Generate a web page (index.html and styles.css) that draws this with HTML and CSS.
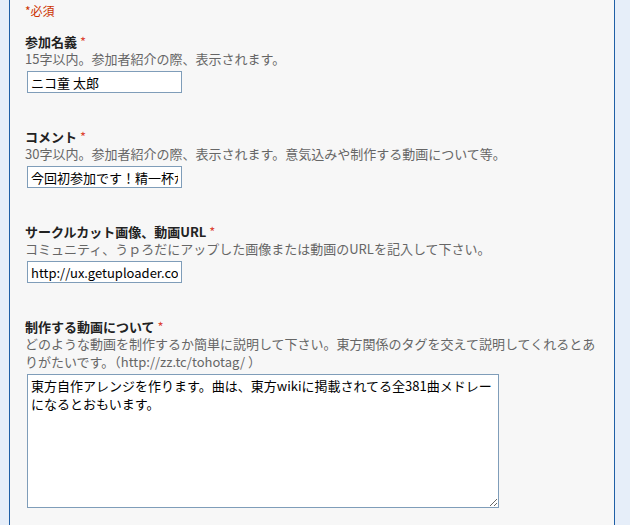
FILE: index.html
```html
<!DOCTYPE html>
<html lang="ja">
<head>
<meta charset="utf-8">
<link rel="stylesheet" href="styles.css">
</head>
<body>
<div class="panel">
  <p class="required-note">*必須</p>

  <div class="field">
    <div class="label">参加名義 <span class="star">*</span></div>
    <div class="desc">15字以内。参加者紹介の際、表示されます。</div>
    <input class="text" type="text" value="ニコ童 太郎">
  </div>

  <div class="field">
    <div class="label">コメント <span class="star">*</span></div>
    <div class="desc">30字以内。参加者紹介の際、表示されます。意気込みや制作する動画について等。</div>
    <input class="text" type="text" value="今回初参加です！精一杯がんばります！">
  </div>

  <div class="field">
    <div class="label">サークルカット画像、動画URL <span class="star">*</span></div>
    <div class="desc">コミュニティ、うｐろだにアップした画像または動画のURLを記入して下さい。</div>
    <input class="text" type="text" value="http://ux.getuploader.com/nicodou/">
  </div>

  <div class="field">
    <div class="label">制作する動画について <span class="star">*</span></div>
    <div class="desc">どのような動画を制作するか簡単に説明して下さい。東方関係のタグを交えて説明してくれるとありがたいです。（http://zz.tc/tohotag/ ）</div>
    <textarea class="area">東方自作アレンジを作ります。曲は、東方wikiに掲載されてる全381曲メドレーになるとおもいます。</textarea>
  </div>
</div>
</body>
</html>
```

FILE: styles.css
```css
html, body {
  margin: 0;
  padding: 0;
  background: #e6eef9;
  height: 100%;
  overflow: hidden;
}

body {
  font-family: "Noto Sans CJK JP", "Liberation Sans", sans-serif;
  font-size: 13px;
  color: #333;
}

.panel {
  margin-left: 9px;
  width: 606px;
  min-height: 100%;
  box-sizing: border-box;
  background: #f7f7f7;
  border-left: 1px solid #1f5fa6;
  border-right: 1px solid #1f5fa6;
  padding: 2px 0 0 15px;
}

.required-note {
  margin: 0;
  font-size: 12px;
  line-height: 17px;
  color: #cc3300;
}

.field {
  display: flex;
  flex-direction: column;
  align-items: flex-start;
  margin-top: 14px;
  margin-bottom: 35px;
}

.label {
  font-weight: bold;
  font-size: 13px;
  line-height: 17px;
  color: #222;
}

.star {
  color: #dd4433;
  font-weight: normal;
}

.desc {
  color: #666;
  line-height: 18px;
  width: 580px;
}

.text {
  margin: 3px 0 0 2px;
  width: 155px;
  height: 22px;
  box-sizing: border-box;
  border: 1px solid #7f9db9;
  background: #fff;
  padding: 1px 3px;
  font-family: "Noto Sans CJK JP", "Liberation Sans", sans-serif;
  font-size: 13px;
  color: #000;
  outline: none;
}

.area {
  margin: 3px 0 0 2px;
  width: 472px;
  height: 134px;
  box-sizing: border-box;
  border: 1px solid #7f9db9;
  background: #fff;
  padding: 2px 3px;
  font-family: "Noto Sans CJK JP", "Liberation Sans", sans-serif;
  font-size: 13px;
  line-height: 18px;
  color: #000;
  resize: both;
  outline: none;
}
```
